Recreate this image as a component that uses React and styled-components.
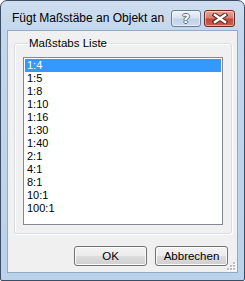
import React, { useState } from "react";
import styled, { createGlobalStyle } from "styled-components";

const GlobalStyle = createGlobalStyle`
  html, body {
    margin: 0;
    padding: 0;
    background: #ffffff;
  }
  * {
    box-sizing: border-box;
  }
`;

const Window = styled.div`
  width: 245px;
  height: 281px;
  border: 1px solid #3b4e66;
  border-radius: 7px 7px 2px 2px;
  background: linear-gradient(180deg, #cfdeef 0px, #c3d7ed 30px, #bad2ea 100%);
  display: flex;
  flex-direction: column;
  padding: 0 6px 7px 6px;
  font-family: "Liberation Sans", Arial, sans-serif;
`;

const TitleBar = styled.div`
  height: 29px;
  display: flex;
  align-items: flex-start;
  padding-top: 9px;
`;

const Title = styled.div`
  flex: 1;
  margin-left: 5px;
  font-size: 12px;
  line-height: 17px;
  color: #000;
  white-space: nowrap;
`;

const CaptionButton = styled.div`
  width: ${(p) => p.w}px;
  height: 17px;
  margin-left: ${(p) => p.gap}px;
  border: 1px solid ${(p) => (p.close ? "#6a2a24" : "#6b7d96")};
  border-radius: 3px;
  display: flex;
  align-items: center;
  justify-content: center;
  box-shadow: inset 0 0 0 1px rgba(255, 255, 255, 0.45);
  background: ${(p) =>
    p.close
      ? "linear-gradient(180deg, #e6a69c 0%, #d47f72 45%, #c2483b 55%, #c8604f 100%)"
      : "linear-gradient(180deg, #eef3fa 0%, #d8e3f0 45%, #c1d2e7 55%, #cfdcec 100%)"};
  &:last-child {
    margin-right: 3px;
  }
`;

const HelpGlyph = styled.span`
  font-family: "DejaVu Sans", sans-serif;
  font-weight: bold;
  font-size: 13px;
  line-height: 13px;
  color: #ffffff;
  text-shadow: -1px 0 #5b6c84, 1px 0 #5b6c84, 0 -1px #5b6c84, 0 1px #5b6c84;
`;

const Client = styled.div`
  flex: 1;
  position: relative;
  border: 1px solid #93a9c4;
  background: #f0f0f0;
  display: flex;
  flex-direction: column;
`;

const Group = styled.fieldset`
  margin: 6px 5px 0 6px;
  padding: 7px 8px 8px 8px;
  border: 1px solid #d5dfe5;
  border-radius: 3px;
  box-shadow: inset 1px 1px 0 #ffffff, 1px 1px 0 #ffffff;
  min-width: 0;
`;

const Legend = styled.legend`
  margin-left: 4px;
  padding: 0 2px;
  font-size: 11.5px;
  line-height: 13px;
  color: #000;
`;

const List = styled.div`
  height: 168px;
  border: 1px solid #828790;
  background: #ffffff;
  padding: 1px;
`;

const Item = styled.div`
  height: 13px;
  line-height: 13px;
  padding-left: 2px;
  font-size: 11px;
  color: ${(p) => (p.selected ? "#ffffff" : "#000000")};
  background: ${(p) => (p.selected ? "#3399ff" : "transparent")};
`;

const ButtonRow = styled.div`
  display: flex;
  justify-content: flex-end;
  gap: 8px;
  margin-top: 12px;
  padding-right: 9px;
`;

const Button = styled.button`
  width: 73px;
  height: 20px;
  padding: 0;
  border: 1px solid #707070;
  border-radius: 3px;
  font-family: "Liberation Sans", Arial, sans-serif;
  font-size: 11.5px;
  color: #000;
  box-shadow: inset 0 0 0 1px #fcfcfc;
  background: linear-gradient(180deg, #f2f2f2 0%, #ebebeb 50%, #dddddd 50%, #cfcfcf 100%);
`;

const Grip = styled.svg`
  position: absolute;
  right: 1px;
  bottom: 1px;
`;

const scales = ["1:4", "1:5", "1:8", "1:10", "1:16", "1:30", "1:40", "2:1", "4:1", "8:1", "10:1", "100:1"];

export default function App() {
  const [selected, setSelected] = useState(0);

  return (
    <>
      <GlobalStyle />
      <Window>
        <TitleBar>
          <Title>Fügt Maßstäbe an Objekt an</Title>
          <CaptionButton w={30} gap={0}>
            <HelpGlyph>?</HelpGlyph>
          </CaptionButton>
          <CaptionButton w={31} gap={3} close>
            <svg width="16" height="11" viewBox="0 0 16 11">
              <path d="M3 2 L13 9 M13 2 L3 9" stroke="#5a2420" strokeWidth="4.5" strokeLinecap="square" />
              <path d="M3 2 L13 9 M13 2 L3 9" stroke="#ffffff" strokeWidth="2.5" strokeLinecap="square" />
            </svg>
          </CaptionButton>
        </TitleBar>
        <Client>
          <Group>
            <Legend>Maßstabs Liste</Legend>
            <List>
              {scales.map((s, i) => (
                <Item key={s} selected={i === selected} onClick={() => setSelected(i)}>
                  {s}
                </Item>
              ))}
            </List>
          </Group>
          <ButtonRow>
            <Button>OK</Button>
            <Button>Abbrechen</Button>
          </ButtonRow>
          <Grip width="10" height="10" viewBox="0 0 10 10">
            {[
              [7, 1],
              [4, 4],
              [7, 4],
              [1, 7],
              [4, 7],
              [7, 7],
            ].map(([x, y]) => (
              <g key={`${x}-${y}`}>
                <rect x={x + 1} y={y + 1} width="2" height="2" fill="#ffffff" />
                <rect x={x} y={y} width="2" height="2" fill="#b8bdc4" />
              </g>
            ))}
          </Grip>
        </Client>
      </Window>
    </>
  );
}
